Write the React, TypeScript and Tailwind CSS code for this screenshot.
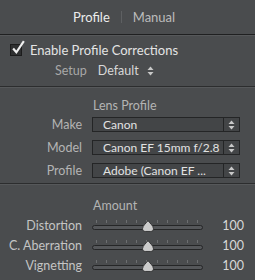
import React from "react";

function Arrows() {
  return (
    <svg width="7" height="10" viewBox="0 0 7 10" className="block">
      <path d="M3.5 0.5 L6.5 4 L0.5 4 Z" fill="#c8c8c8" />
      <path d="M3.5 9.5 L6.5 6 L0.5 6 Z" fill="#c8c8c8" />
    </svg>
  );
}

function Select({ value }: { value: string }) {
  return (
    <div className="flex h-[15px] w-[148px] items-stretch border border-[#242526] bg-[#434547]">
      <div className="flex-1 overflow-hidden whitespace-nowrap pl-[10px] text-[12px] leading-[13px] text-[#e2e2e2]">{value}</div>
      <div className="flex w-[16px] items-center justify-center border-l border-[#242526]">
        <Arrows />
      </div>
    </div>
  );
}

function Slider() {
  const ticks = [0, 1, 2, 3, 4, 5, 6, 7, 8, 9, 10];
  return (
    <div className="relative h-[14px] w-[111px]">
      <div className="absolute left-[4px] right-[5px] top-[1px] flex justify-between">
        {ticks.map((t) => (
          <div key={t} className="h-[3px] w-px bg-[#6c6e70]" />
        ))}
      </div>
      <div className="absolute left-0 right-0 top-[6px] h-[5px] rounded-full border border-[#252627] bg-[#55575a]" />
      <svg width="12" height="12" viewBox="0 0 11 11" className="absolute left-[50px] top-[1px]">
        <path d="M5.5 0.5 C6.5 2.5 10.5 5 10.5 8 C10.5 9.5 9.5 10.5 8 10.5 L3 10.5 C1.5 10.5 0.5 9.5 0.5 8 C0.5 5 4.5 2.5 5.5 0.5 Z" fill="#cbcbcb" stroke="#2a2b2c" strokeWidth="0.8" />
      </svg>
    </div>
  );
}

function Row({ label, children }: { label: string; children: React.ReactNode }) {
  return (
    <div className="flex h-[15px] items-center">
      <div className="w-[82px] text-right text-[12.5px] leading-[15px] text-[#b4b4b4]">{label}</div>
      <div className="ml-[10px]">{children}</div>
    </div>
  );
}

function Separator() {
  return (
    <div>
      <div className="h-px bg-[#2c2d2e]" />
      <div className="h-px bg-[#56585a]" />
    </div>
  );
}

export default function App() {
  return (
    <div className="h-[280px] w-[255px] overflow-hidden bg-[#4a4c4e] leading-[16px]" style={{ fontFamily: "Lato, 'Open Sans', sans-serif" }}>
      {/* Tabs */}
      <div className="flex h-[34px] items-center pl-[73px] text-[13px]">
        <span className="text-[#ececec]">Profile</span>
        <span className="mx-[11px] h-[12px] w-px bg-[#5e6062]" />
        <span className="text-[#bcbcbc]">Manual</span>
      </div>
      <div className="h-px bg-[#1f2021]" />
      <div className="h-px bg-[#56585a]" />

      {/* Enable */}
      <div className="px-[10px] pt-[6px]">
        <div className="flex h-[16px] items-center gap-[8px]">
          <div className="relative h-[12px] w-[12px] border border-[#1c1c1c] bg-[#2e2f30]">
            <svg width="15" height="15" viewBox="0 0 14 14" className="absolute -top-[5px] left-0">
              <path d="M2 8 L5 11.5 L12 1" fill="none" stroke="#f0f0f0" strokeWidth="2" />
            </svg>
          </div>
          <span className="text-[13px] text-[#e4e4e4]">Enable Profile Corrections</span>
        </div>
        <div className="mt-[5px] flex h-[16px] items-center pl-[45px] text-[12.5px]">
          <span className="text-[#a8a8a8]">Setup</span>
          <span className="ml-[11px] text-[#d8d8d8]">Default</span>
          <span className="ml-[8px]"><Arrows /></span>
        </div>
      </div>
      <div className="mt-[7px]"><Separator /></div>

      {/* Lens Profile */}
      <div className="pt-[10px]">
        <div className="h-[16px] pl-[93px] text-[12.5px] text-[#b4b4b4]">Lens Profile</div>
        <div className="mt-[3px] flex flex-col gap-[8px]">
          <Row label="Make"><Select value="Canon" /></Row>
          <Row label="Model"><Select value="Canon EF 15mm f/2.8" /></Row>
          <Row label="Profile"><Select value="Adobe (Canon EF ..." /></Row>
        </div>
      </div>
      <div className="mt-[5px]"><Separator /></div>

      {/* Amount */}
      <div className="pt-[13px]">
        <div className="h-[16px] pl-[93px] text-[12.5px] text-[#b4b4b4]">Amount</div>
        <div className="mt-[4px] flex flex-col gap-[4px]">
          {["Distortion", "C. Aberration", "Vignetting"].map((l) => (
            <div key={l} className="flex h-[16px] items-center">
              <div className="w-[82px] text-right text-[12.5px] text-[#c4c4c4]">{l}</div>
              <div className="ml-[10px]"><Slider /></div>
              <div className="w-[41px] text-right text-[12.5px] text-[#d8d8d8]">100</div>
            </div>
          ))}
        </div>
      </div>
    </div>
  );
}
